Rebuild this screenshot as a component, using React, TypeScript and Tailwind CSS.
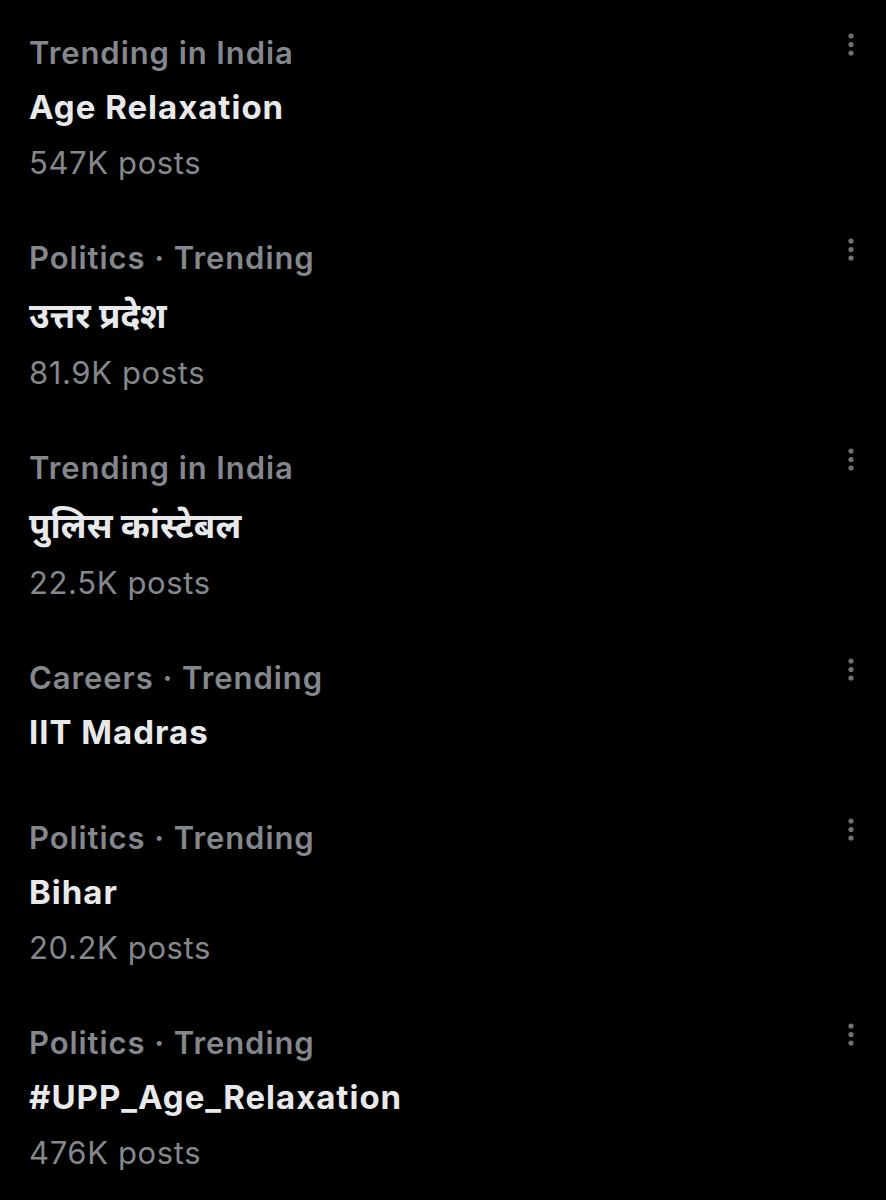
type Trend = {
  category: string
  title: string
  posts?: string
  hindi?: boolean
}

const trends: Trend[] = [
  { category: 'Trending in India', title: 'Age Relaxation', posts: '547K posts' },
  { category: 'Politics · Trending', title: 'उत्तर प्रदेश', posts: '81.9K posts', hindi: true },
  { category: 'Trending in India', title: 'पुलिस कांस्टेबल', posts: '22.5K posts', hindi: true },
  { category: 'Careers · Trending', title: 'IIT Madras' },
  { category: 'Politics · Trending', title: 'Bihar', posts: '20.2K posts' },
  { category: 'Politics · Trending', title: '#UPP_Age_Relaxation', posts: '476K posts' },
]

// vertical "more" dots
function MoreIcon() {
  return (
    <svg width="10" height="26" viewBox="0 0 10 26" className="mt-[6px]">
      <circle cx="5" cy="5" r="2.6" fill="#6e7276" />
      <circle cx="5" cy="13.5" r="2.6" fill="#6e7276" />
      <circle cx="5" cy="22" r="2.6" fill="#6e7276" />
    </svg>
  )
}

export default function App() {
  return (
    <div className="bg-black min-h-[1200px] w-[886px] pt-[5px] font-['Inter','Noto_Sans',sans-serif]">
      {trends.map((t, i) => (
        <div
          key={i}
          className={`flex justify-between pl-[29px] pr-[30px] pt-[20px] ${t.posts ? 'pb-[20px]' : 'pb-[30px]'}`}
        >
          <div className="flex flex-col">
            <div className="leading-[55px] text-[31px] font-semibold tracking-[0.03em] text-[#84888d]">
              {t.category}
            </div>
            {t.hindi ? (
              <div className="leading-[60px] text-[35px] font-bold text-[#e7e9ea]">{t.title}</div>
            ) : (
              <div className="leading-[55px] text-[33px] font-bold tracking-[0.03em] text-[#e7e9ea]">
                {t.title}
              </div>
            )}
            {t.posts && (
              <div className="leading-[55px] text-[31px] tracking-[0.02em] text-[#84888d]">{t.posts}</div>
            )}
          </div>
          <MoreIcon />
        </div>
      ))}
    </div>
  )
}
